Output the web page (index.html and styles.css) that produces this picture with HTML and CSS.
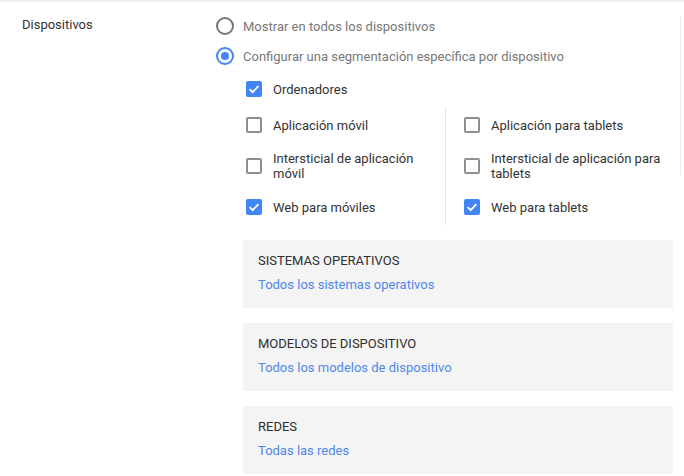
FILE: index.html
```html
<!DOCTYPE html>
<html lang="es">
<head>
  <meta charset="UTF-8">
  <meta name="viewport" content="width=device-width, initial-scale=1.0">
  <title>Dispositivos</title>
  <link rel="stylesheet" href="styles.css">
</head>
<body>
  <div class="setting-row">
    <div class="setting-label">Dispositivos</div>

    <div class="setting-body">
      <label class="radio-row">
        <span class="radio"></span>
        Mostrar en todos los dispositivos
      </label>
      <label class="radio-row">
        <span class="radio checked"></span>
        Configurar una segmentación específica por dispositivo
      </label>

      <div class="device-options">
        <label class="check-row top-check">
          <span class="checkbox checked">
            <svg viewBox="0 0 16 16"><path d="M3.6 8.2 L6.6 11.2 L12.4 5.2"/></svg>
          </span>
          <span class="check-text">Ordenadores</span>
        </label>

        <div class="device-grid">
          <div class="device-col">
            <label class="check-row">
              <span class="checkbox"></span>
              <span class="check-text">Aplicación móvil</span>
            </label>
            <label class="check-row">
              <span class="checkbox"></span>
              <span class="check-text">Intersticial de aplicación móvil</span>
            </label>
            <label class="check-row">
              <span class="checkbox checked">
                <svg viewBox="0 0 16 16"><path d="M3.6 8.2 L6.6 11.2 L12.4 5.2"/></svg>
              </span>
              <span class="check-text">Web para móviles</span>
            </label>
          </div>
          <div class="device-col right">
            <label class="check-row">
              <span class="checkbox"></span>
              <span class="check-text">Aplicación para tablets</span>
            </label>
            <label class="check-row">
              <span class="checkbox"></span>
              <span class="check-text">Intersticial de aplicación para tablets</span>
            </label>
            <label class="check-row">
              <span class="checkbox checked">
                <svg viewBox="0 0 16 16"><path d="M3.6 8.2 L6.6 11.2 L12.4 5.2"/></svg>
              </span>
              <span class="check-text">Web para tablets</span>
            </label>
          </div>
        </div>

        <div class="panel">
          <div class="panel-title">Sistemas operativos</div>
          <a href="#" class="panel-link">Todos los sistemas operativos</a>
        </div>
        <div class="panel">
          <div class="panel-title">Modelos de dispositivo</div>
          <a href="#" class="panel-link">Todos los modelos de dispositivo</a>
        </div>
        <div class="panel">
          <div class="panel-title">Redes</div>
          <a href="#" class="panel-link">Todas las redes</a>
        </div>
      </div>
    </div>

    <div class="side-rail"></div>
  </div>
</body>
</html>
```
FILE: styles.css
```css
body {
  margin: 0;
  padding: 0;
  font-family: Roboto, 'Liberation Sans', sans-serif;
  font-size: 13px;
  color: #333;
  background: #fff;
  overflow: hidden;
}
.setting-row {
  display: flex;
  align-items: flex-start;
  border-top: 2px solid #eeeeee;
}
.setting-label {
  width: 194px;
  padding: 15px 0 0 22px;
  line-height: 16px;
  color: #333;
}
.setting-body {
  width: 464px;
  padding-top: 9px;
}
.side-rail {
  width: 1px;
  height: 159px;
  margin-top: 14px;
  background: #ececec;
}
.radio-row {
  display: flex;
  align-items: center;
  height: 30px;
  color: #777;
}
.radio {
  box-sizing: border-box;
  width: 18px;
  height: 18px;
  border: 2px solid #757575;
  border-radius: 50%;
  margin-right: 9px;
  display: flex;
  align-items: center;
  justify-content: center;
}
.radio.checked {
  border-color: #4285f4;
}
.radio.checked::after {
  content: "";
  width: 8px;
  height: 8px;
  border-radius: 50%;
  background: #4285f4;
}
.device-options {
  margin: 0 7px 0 27px;
}
.check-row {
  display: flex;
  align-items: center;
  min-height: 30px;
  padding-left: 3px;
}
.top-check {
  margin-top: 3px;
}
.checkbox {
  box-sizing: border-box;
  flex: none;
  width: 16px;
  height: 16px;
  border: 2px solid #8f8f8f;
  border-radius: 2px;
  margin-right: 11px;
  display: flex;
}
.checkbox.checked {
  background: #4285f4;
  border-color: #4285f4;
}
.checkbox svg {
  width: 16px;
  height: 16px;
  margin: -2px;
}
.checkbox svg path {
  fill: none;
  stroke: #fff;
  stroke-width: 1.8;
}
.check-text {
  line-height: 15px;
  color: #333;
}
.device-grid {
  display: grid;
  grid-template-columns: 202px 228px;
  margin-top: 3px;
}
.device-col {
  display: flex;
  flex-direction: column;
  gap: 11px;
  padding: 3px 20px 3px 0;
}
.device-col.right {
  border-left: 1px solid #e6e6e6;
  padding-left: 15px;
  padding-right: 0;
}
.panel {
  background: #f4f4f4;
  padding: 13px 15px 15px;
  margin-top: 15px;
}
.panel-title {
  font-size: 13px;
  font-weight: 400;
  line-height: 16px;
  text-transform: uppercase;
  color: #2f2f2f;
}
.panel-link {
  display: block;
  margin-top: 8px;
  line-height: 16px;
  color: #5088ec;
  text-decoration: none;
}
```
